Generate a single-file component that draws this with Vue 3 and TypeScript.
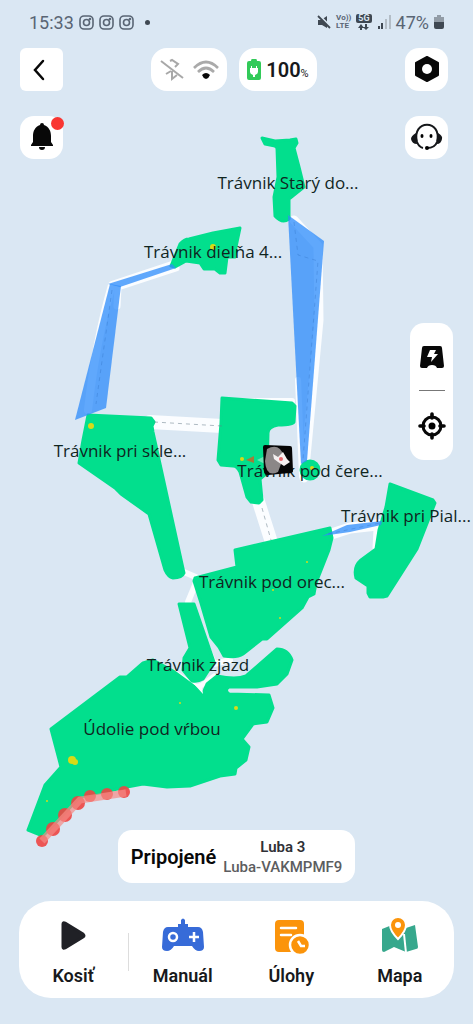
<script setup lang="ts">
interface Label { text: string; x: number; y: number }
interface Dot { x: number; y: number; r: number }

const zones: string[] = [
  'M262 138 L275 141 L290 140 L296 139 L297 143 L294 148 L299 167 L304 187 L289 199 L289 219 Q282 224 275 216 L274 197 L278 177 L277 148 L275 146 L265 144 Z',
  'M171 266 L180 244 Q184 239 189 239 L213 233 L240 228 L236 247 L235 257 L227 257 L225 273 L220 273 L215 269 L204 269 L200 263 L186 261 L175 267 Z',
  'M88 415 L151 418 L154 422 L152 426 L153 432 L184 573 Q182 578 173 578 Q168 577 165 570 L149 514 L121 494 L115 488 L79 463 L83 440 Z',
  'M222 398 L292 403 L295 406 L294 422 Q293 425 278 425 Q268 427 268 433 L267 473 L260 479 L262 500 L259 503 L251 502 L247 497 L240 472 Q237 466 233 466 L221 465 L218 460 L221 423 Z',
  'M390 484 L433 500 L435 503 L417 549 L387 596 L383 597 L370 597 L368 593 L368 586 L356 578 Q353 567 361 560 L376 549 L379 530 L386 507 Z',
  'M235 550 L330 528 L332 538 L329 550 L316 583 L314 594 L308 597 L302 608 L267 639 L262 639 L243 654 Q237 658 224 656 L219 647 L211 637 L201 603 L194 581 L195 578 L237 567 Z',
  'M179 604 L194 604 L214 662 L203 679 Q198 682 192 681 L183 670 L184 658 L190 648 Z',
  'M51 729 L120 677 L127 677 L143 663 L153 660 L173 671 L203 693 L207 684 L217 676 Q236 680 246 676 L277 649 Q288 649 292 660 L287 674 L277 684 L257 687 L229 687 Q224 690 229 694 L269 695 L273 708 L267 722 L253 724 L242 739 L249 747 L246 760 L236 768 L235 774 L220 776 L190 786 L167 787 L143 784 L127 787 L80 797 L43 836 L28 830 L45 785 L61 767 Z',
]

const labels: Label[] = [
  { text: 'Trávnik Starý do...', x: 288, y: 189 },
  { text: 'Trávnik dielňa 4...', x: 213, y: 258 },
  { text: 'Trávnik pri skle...', x: 120, y: 457 },
  { text: 'Trávnik pod čere...', x: 310, y: 477 },
  { text: 'Trávnik pri Pial...', x: 406, y: 522 },
  { text: 'Trávnik pod orec...', x: 272, y: 588 },
  { text: 'Trávnik zjazd', x: 198, y: 671 },
  { text: 'Údolie pod vŕbou', x: 152, y: 735 },
]

const beacons: Dot[] = [
  { x: 91, y: 426, r: 3 }, { x: 213, y: 247, r: 3 }, { x: 72, y: 760, r: 4 }, { x: 75, y: 762, r: 3 },
  { x: 180, y: 703, r: 1 }, { x: 236, y: 708, r: 2 }, { x: 47, y: 801, r: 1 }, { x: 273, y: 590, r: 1 },
  { x: 280, y: 618, r: 1 }, { x: 307, y: 562, r: 1 }, { x: 242, y: 459, r: 2 }, { x: 312, y: 468, r: 2 },
]

const barrier: Dot[] = [
  { x: 42, y: 841, r: 6 }, { x: 53, y: 829, r: 7 }, { x: 65, y: 815, r: 7 }, { x: 78, y: 803, r: 7 },
  { x: 90, y: 796, r: 6 }, { x: 107, y: 794, r: 6 }, { x: 124, y: 792, r: 6 },
]
</script>

<template>
  <main class="screen">
    <svg class="map" viewBox="0 0 473 1024" role="img" aria-label="Mapa trávnikov">
      <g class="path">
        <path d="M172 265 L112 285 Q96 340 88 410" stroke-width="8" />
        <path d="M176 268 L118 287 L117 306" stroke-width="7" />
        <path d="M294 220 L318 246 L319 320 L304 478" stroke-width="9" />
        <path d="M298 380 L302 476" stroke-width="6" />
        <path d="M150 422 L222 426" stroke-width="14" />
        <path d="M258 500 L272 544" stroke-width="13" />
        <path d="M322 537 L350 528 L386 524" stroke-width="11" />
        <path d="M376 530 L375 548" stroke-width="5" />
        <path d="M184 572 L198 578 L188 602 L214 664 L230 660" stroke-width="6" />
        <path d="M240 401 L292 401" stroke-width="6" />
        <path d="M174 672 L198 688 L214 676" stroke-width="5" />
      </g>
      <g class="grass">
        <path v-for="d in zones" :key="d" :d="d" />
        <circle cx="310" cy="470" r="9" />
      </g>
      <path class="gap" d="M193 683 Q199 685 205 681 L202 687 L203 694 Z" />
      <g class="crossing">
        <path d="M110 284 L121 286 L106 408 L75 420 Z" />
        <path d="M108 284 L172 264 L176 268 L120 287 Z" />
        <path d="M288 215 L324 241 L307 461 L301 464 Z" />
        <path d="M322 536 L347 525 L382 521 L381 525 L350 532 Z" />
      </g>
      <g class="route">
        <path d="M154 422 L222 426" />
        <path d="M262 508 L271 540" />
        <path class="faint" d="M112 290 L96 404" />
        <path class="faint" d="M294 222 L298 255 L318 261 L303 460" />
        <path class="faint" d="M328 534 L380 523" />
      </g>
      <circle v-for="(b, i) in beacons" :key="i" class="beacon" :cx="b.x" :cy="b.y" :r="b.r" />
      <g class="barrier">
        <circle v-for="(b, i) in barrier" :key="i" :cx="b.x" :cy="b.y" :r="b.r" />
        <path d="M42 841 L80 800 L126 793" />
      </g>
      <g class="labels">
        <text v-for="l in labels" :key="l.text" :x="l.x" :y="l.y">{{ l.text }}</text>
      </g>
      <g>
        <path d="M246 460 L254 456 V463 Z" fill="#a67a38" />
        <path d="M257 460 L267 455 V465 Z" fill="#67e7b6" />
        <path d="M265 445 L290 446 Q292 446 292 448 L293 471 Q293 473 290 473 L268 475 Q264 475 264 471 L263 447 Q263 445 265 445" fill="#050505" />
        <path d="M267 449 Q279 442 284 456 L278 472 Q266 478 265 461 Z" fill="#8b8787" />
        <path d="M273 454 L278 457 L283 452 L287 459 L290 462 L284 466 L278 462 L274 459 Z" fill="#f5f0f0" />
        <circle cx="281" cy="459" r="2" fill="#e9676c" />
      </g>
    </svg>

    <header class="status">
      <div class="status-side">
        <time>15:33</time>
        <svg v-for="n in 3" :key="n" width="15" height="15" viewBox="0 0 15 15" fill="none" stroke="#596574" stroke-width="1.6">
          <rect x="1" y="1" width="13" height="13" rx="4" /><circle cx="7.5" cy="7.5" r="3" /><circle cx="11" cy="4" r=".5" />
        </svg>
        <i class="more"></i>
      </div>
      <div class="status-side right">
        <svg width="14" height="14" viewBox="0 0 14 14"><path d="M1 5 H4 L10 1 V13 L5 10 H1 Z" fill="#3f4852" /><path d="M2 0 L14 12" stroke="#dae7f3" stroke-width="2" /><path d="M1 1 L13 13" stroke="#3f4852" stroke-width="1.8" /></svg>
        <span class="lte">Vo))<br />LTE</span>
        <span class="five"><b>5G</b><svg width="11" height="6" viewBox="0 0 11 6" fill="#3f4852"><path d="M0 4 L3 0 L6 4 H4 V6 H2 V4Z M7 0 H9 V3 H11 L8 6 L5 3 H7 Z" /></svg></span>
        <svg width="14" height="14" viewBox="0 0 14 14"><path d="M1 11h2v3H1z M4 8h2v6H4z" fill="#3f4852" /><path d="M8 4h2v10H8z M12 0h2v14h-2z" fill="#b3bdc6" /></svg>
        <span>47%</span>
        <svg width="10" height="14" viewBox="0 0 10 14"><path d="M3 0h4v2h3v5H0V2h3z" fill="#929ca6" /><path d="M0 7h10v5q0 2-2 2H2q-2 0-2-2z" fill="#3f4852" /></svg>
      </div>
    </header>

    <div class="top">
      <button class="tile back" aria-label="Späť"><svg width="43" height="43" viewBox="0 0 43 43"><path d="M23 13 L15 22 L23 31" fill="none" stroke="#080808" stroke-width="2.5" stroke-linecap="round" /></svg></button>
      <div class="chips">
        <div class="chip radios">
          <svg width="24" height="24" viewBox="0 0 24 24" fill="none" stroke="#a8a8a8" stroke-width="2"><path d="M1 3 L23 20" /><path d="M10 3 L12 2 L18 6 L15 9 M6 16 L11 13 M12 13 V21 L17 17" /></svg>
          <svg width="26" height="20" viewBox="0 0 26 20" fill="none" stroke="#aaa" stroke-width="2.6"><path d="M1 8 Q13 -4 25 8" /><path d="M5 12 Q13 4 21 12" /><path d="M9 15 Q13 11 17 15 Q16 18 13 19 Q10 18 9 15Z" fill="#080808" stroke="none" /></svg>
        </div>
        <div class="chip charge">
          <svg width="14" height="22" viewBox="0 0 14 22"><path d="M5 0h4q1 0 1 2h2q2 0 2 2v15q0 2-2 2H2q-2 0-2-2V4q0-2 2-2h2q0-2 1-2" fill="#32ca59" /><path d="M4 7h1v2h4V7h1v2h1v4q0 2-3 3v2H6v-2q-3-1-3-3V9h1z" fill="#fff" /></svg>
          <span><b>100</b><small>%</small></span>
        </div>
      </div>
      <button class="tile" aria-label="Nastavenia"><svg width="43" height="43" viewBox="0 0 43 43"><path d="M22 9 L33 15 V27 L22 33 L11 27 V15 Z" fill="#080808" stroke="#080808" stroke-width="2" stroke-linejoin="round" /><circle cx="22" cy="21" r="5" fill="#fff" /></svg></button>
    </div>

    <div class="second">
      <button class="tile alert" aria-label="Upozornenia"><svg width="43" height="43" viewBox="0 0 43 43"><path d="M20 9q0-2 2-2t2 2c5 2 7 6 7 11v6l2 3v1H11v-1l2-3v-6c0-5 2-9 7-11zM19 31h6q0 3-3 3t-3-3" fill="#080808" /></svg></button>
      <button class="tile" aria-label="Podpora">
        <svg width="43" height="43" viewBox="0 0 43 43"><g fill="none" stroke="#15171a" stroke-width="2"><path d="M12 26 C6 3 38 3 32 26 Q30 32 22 32" /><path d="M12 26 Q14 31 18 32" /></g><path d="M11 17 Q6 20 6 23 Q7 28 12 28 Z M33 17 Q38 20 37 23 Q36 28 32 28 Z" fill="#15171a" /><ellipse cx="17" cy="20" rx="1.5" ry="2" /><ellipse cx="26" cy="20" rx="1.5" ry="2" /><circle cx="22" cy="32" r="2" /></svg>
      </button>
    </div>

    <aside class="tools">
      <button aria-label="Nabíjacia stanica"><svg width="26" height="24" viewBox="0 0 26 24"><path d="M5 1 H21 Q23 1 23 3 L25 21 Q25 23 23 23 H18 Q17 20 13 20 Q9 20 8 23 H3 Q1 23 1 21 L3 3 Q3 1 5 1" fill="#080808" /><path d="M11 5 H17 L15 9 H19 L12 17 L13 12 H8 Z" fill="#fff" /></svg></button>
      <hr />
      <button aria-label="Vycentrovať"><svg width="28" height="28" viewBox="0 0 28 28"><circle cx="14" cy="14" r="9" fill="none" stroke="#080808" stroke-width="3" /><circle cx="14" cy="14" r="3.5" /><path d="M14 2V6 M14 22V26 M2 14H6 M22 14H26" stroke="#080808" stroke-width="3.6" stroke-linecap="round" /></svg></button>
    </aside>

    <section class="device">
      <strong>Pripojené</strong>
      <div><span>Luba 3</span><span class="serial">Luba-VAKMPMF9</span></div>
    </section>

    <nav class="nav">
      <button>
        <svg width="44" height="38" viewBox="0 0 44 38"><path d="M12 8 Q12 6 14 7 L32 18 Q34 20 32 21 L14 32 Q12 33 12 31 Z" fill="#202126" stroke="#202126" stroke-width="3" stroke-linejoin="round" /></svg>
        Kosiť
      </button>
      <i class="divider"></i>
      <button>
        <svg width="44" height="38" viewBox="0 0 44 38"><path d="M20 4 Q22 1 24 4 V8 H27 V11 H37 Q41 11 42 16 L43 31 Q43 35 38 35 Q34 35 31 30 H13 Q10 35 6 35 Q1 35 1 31 L2 16 Q3 11 7 11 H17 V8 H20 Z" fill="#376bd8" /><circle cx="12" cy="21" r="4" fill="none" stroke="#fff" stroke-width="2.5" /><path d="M28 21 H38 M33 16 V26" stroke="#fff" stroke-width="2.5" /></svg>
        Manuál
      </button>
      <button>
        <svg width="44" height="38" viewBox="0 0 44 38"><rect x="6" y="4" width="29" height="32" rx="4" fill="#fb940b" /><path d="M12 12 H27 M12 19 H22" stroke="#fff" stroke-width="2.5" stroke-linecap="round" /><circle cx="31" cy="29" r="10" fill="#fb940b" stroke="#fff" stroke-width="2.5" /><path d="M29 25 L32 30 H36" fill="none" stroke="#fff" stroke-width="2.5" /></svg>
        Úlohy
      </button>
      <button>
        <svg width="44" height="38" viewBox="0 0 44 38"><path d="M4 13 L14 9 L25 13 L37 9 L40 31 Q40 33 38 33 L28 36 L16 31 L6 36 Q4 36 4 34 Z" fill="#37a88d" /><path d="M26 18 L28 37" stroke="#fff" stroke-width="2" /><path d="M20 23 C15 18 12 13 12 9 A8 8 0 0 1 28 9 C28 13 25 18 20 23 Z" fill="#fb940b" stroke="#fff" stroke-width="2" /><circle cx="20" cy="9" r="3" fill="#fff" /></svg>
        Mapa
      </button>
    </nav>
  </main>
</template>

<style>
body { margin: 0; background: #dae7f3; }
</style>

<style scoped>
.screen { position: relative; display: flex; flex-direction: column; box-sizing: border-box; min-height: 100vh; padding-bottom: 26px; background: #dae7f3; color: #17191c; font-family: Roboto, "Liberation Sans", sans-serif; }
.screen > :not(.map) { position: relative; }
.map { position: absolute; inset: 0; width: 100%; height: 100%; }
svg { display: block; flex: none; }
.path { fill: none; stroke: #fbfdff; stroke-linejoin: round; stroke-linecap: round; }
.gap { fill: #fbfdff; }
.grass { fill: #02df8d; stroke: #02df8d; stroke-width: 3; stroke-linejoin: round; }
.crossing { fill: #2f8dfb; fill-opacity: .76; }
.route { fill: none; stroke: #617786; stroke-opacity: .5; stroke-dasharray: 4 4; }
.route .faint { stroke: #2f6fc4; stroke-opacity: .35; }
.beacon { fill: #d7db17; }
.barrier circle { fill: #ed4542; fill-opacity: .9; }
.barrier path { fill: none; stroke: #f58a84; stroke-opacity: .7; stroke-width: 7; }
.labels { fill: #10251f; font-family: "Open Sans", "Noto Sans", sans-serif; font-size: 17px; text-anchor: middle; }
button { padding: 0; border: 0; background: none; color: inherit; font: inherit; cursor: pointer; }
.status { display: flex; justify-content: space-between; align-items: center; height: 44px; padding: 0 29px; margin-bottom: 4px; color: #596574; font-size: 18px; }
.status-side { display: flex; align-items: center; gap: 5px; }
.more { width: 5px; height: 5px; margin-left: 6px; border-radius: 50%; background: #3f4852; }
.lte { font-size: 8px; line-height: 8px; font-weight: 700; }
.five { display: flex; flex-direction: column; align-items: center; gap: 1px; font-size: 9px; line-height: 9px; }
.five b { padding: 0 2px; border-radius: 2px; background: #3f4852; color: #dae7f3; }
.top, .second { display: flex; justify-content: space-between; padding: 0 25px 0 20px; }
.second { margin-top: 25px; }
.tile { position: relative; width: 43px; height: 43px; border-radius: 14px; background: #fff; }
.back { border-radius: 6px; }
.alert::after { content: ""; position: absolute; top: 1px; right: -1px; width: 13px; height: 13px; border-radius: 50%; background: #f93632; }
.chips { display: flex; gap: 12px; }
.chip { display: flex; align-items: center; justify-content: center; height: 43px; border-radius: 16px; background: #fff; }
.radios { width: 76px; gap: 9px; }
.charge { width: 78px; gap: 5px; }
.charge b { font-size: 20px; font-weight: 600; }
.charge small { font-size: 11px; }
.tools { display: flex; flex-direction: column; align-items: center; justify-content: space-between; align-self: flex-end; box-sizing: border-box; width: 43px; height: 137px; margin: 164px 20px 0 0; padding: 22px 0 20px; border-radius: 14px; background: #fff; }
.tools hr { width: 26px; margin: 0; border: 0; border-top: 1px solid #777; }
.device { display: flex; align-items: center; align-self: center; gap: 7px; box-sizing: border-box; height: 53px; margin-top: auto; padding: 0 13px; border-radius: 14px; background: #fff; }
.device strong { font-size: 20px; font-weight: 600; color: #080808; }
.device div { display: flex; flex-direction: column; align-items: center; font-size: 15px; line-height: 20px; font-weight: 600; color: #303136; }
.device .serial { color: #5c5d60; font-weight: 500; }
.nav { display: flex; align-items: center; box-sizing: border-box; height: 97px; margin: 18px 19px 0; padding-top: 4px; border-radius: 32px; background: #fff; font-size: 18px; font-weight: 600; }
.nav button { display: flex; flex: 1; flex-direction: column; align-items: center; gap: 10px; line-height: 24px; }
.divider { width: 1px; height: 38px; background: #ddd; }
</style>
